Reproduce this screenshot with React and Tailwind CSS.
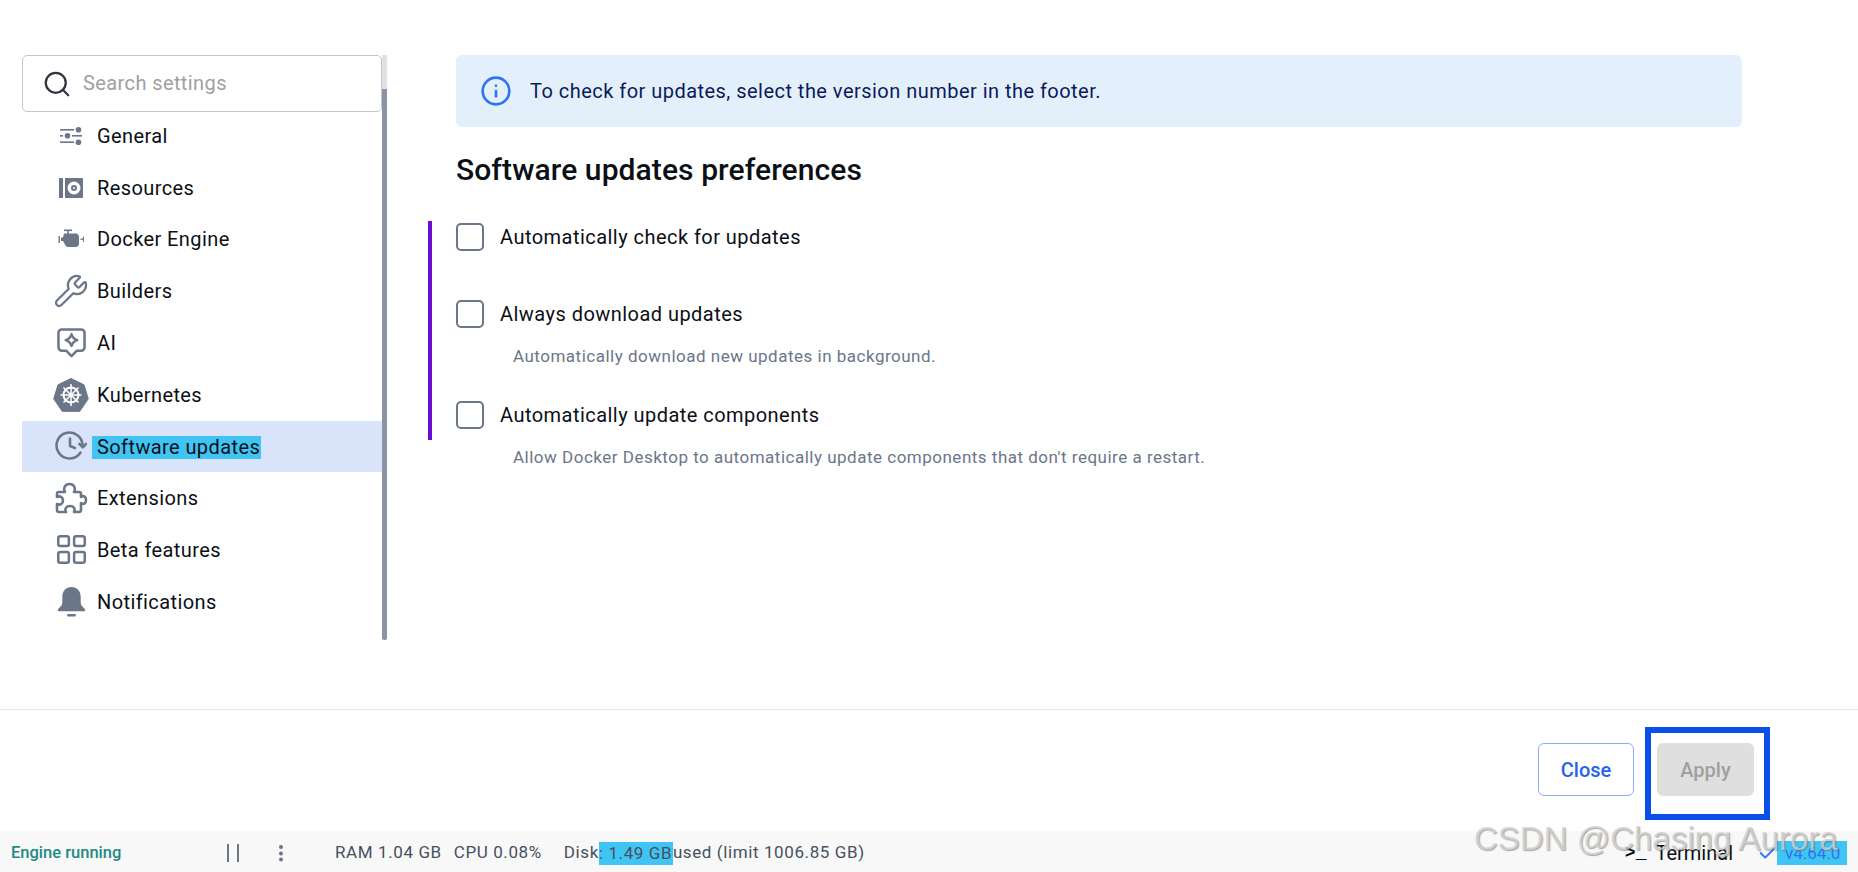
import React from "react";
import { Search, Wrench, Info, Check } from "lucide-react";

const slate = "#6b7689";

function GeneralIcon() {
  return (
    <svg width="22" height="18" viewBox="0 0 22 18" fill={slate}>
      <rect x="0" y="2" width="14" height="1.6" />
      <circle cx="18.5" cy="2.8" r="2.8" />
      <rect x="0" y="8" width="3" height="1.6" />
      <circle cx="7.5" cy="8.8" r="2.8" />
      <rect x="12" y="8" width="10" height="1.6" />
      <rect x="0" y="14.4" width="14" height="1.6" />
      <circle cx="18.5" cy="15.2" r="2.8" />
    </svg>
  );
}
function ResourcesIcon() {
  return (
    <svg width="24" height="20" viewBox="0 0 24 20" fill={slate}>
      <rect x="0" y="0" width="4" height="20" rx="0.5" />
      <path fillRule="evenodd" d="M6 0h17a1 1 0 0 1 1 1v18a1 1 0 0 1-1 1H6zM15 3.5a6.5 6.5 0 1 0 0 13 6.5 6.5 0 0 0 0-13z" />
      <path fillRule="evenodd" d="M15 7a3 3 0 1 0 0 6 3 3 0 0 0 0-6zm0 2a1 1 0 1 1 0 2 1 1 0 0 1 0-2z" />
    </svg>
  );
}
function EngineIcon() {
  return (
    <svg width="26" height="20" viewBox="0 0 26 20" fill={slate}>
      <rect x="6" y="0.5" width="8" height="1.6" />
      <rect x="9.2" y="1" width="1.6" height="4" />
      <path d="M6 4.5h13l2 2.5v8.5l-2 2.5H10c-2 0-3-2-3.5-3.5L5 12H3V8.5h2z" />
      <rect x="0.5" y="7" width="1.4" height="7" />
      <rect x="22.5" y="9.5" width="3" height="1.4" />
      <rect x="25" y="7.5" width="1" height="5.5" />
    </svg>
  );
}
function AiIcon() {
  return (
    <svg width="29" height="30" viewBox="0 0 30 31" fill="none" stroke={slate} strokeWidth="2.6" strokeLinejoin="round">
      <path d="M5 1.5h20a3.5 3.5 0 0 1 3.5 3.5v15a3.5 3.5 0 0 1-3.5 3.5h-4.5L15 29l-5.5-5.5H5A3.5 3.5 0 0 1 1.5 20V5A3.5 3.5 0 0 1 5 1.5z" />
      <path d="M15 6.500c1 3 2.500 5 6 6-3.500 1-5 3-6 6-1-3-2.500-5-6-6 3.500-1 5-3 6-6z" />
    </svg>
  );
}
function KubeIcon() {
  return (
    <svg width="36" height="34" viewBox="0 0 36 34">
      <path d="M18 0.500l13 6.300 4.300 14-8.500 12.500H9.200L0.700 20.800 5 6.800z" fill={slate} stroke={slate} strokeLinejoin="round" />
      <g stroke="#fff" strokeWidth="1.500" fill="none">
        <circle cx="18" cy="17" r="7.500" strokeWidth="2" />
        <path d="M18 6v22M7.500 17h21M10.500 9.500l15 15M25.500 9.500l-15 15" />
      </g>
      <circle cx="18" cy="17" r="2" fill="#fff" />
    </svg>
  );
}
function UpdateIcon() {
  return (
    <svg width="32" height="30" viewBox="0 0 32 30" fill="none" stroke={slate} strokeWidth="2.600" strokeLinecap="round" strokeLinejoin="round">
      <path d="M25.500 21.500A13 13 0 1 1 27.500 15.500" />
      <path d="M15 7.500V15l5 2" />
      <path d="M24.500 13l3.300 3.300 3.200-3.300" />
    </svg>
  );
}
function PuzzleIcon() {
  return (
    <svg width="33" height="33" viewBox="0 0 33 33" fill="none" stroke={slate} strokeWidth="2.600" strokeLinejoin="round">
      <path d="M4 10h6c-2-4 0-8 4.500-8s6.500 4 4.500 8h5a2 2 0 0 1 2 2v3c3-2 5 0 5 3s-2 5-5 3v7a2 2 0 0 1-2 2h-5c1.500-3 0-6-4-6s-5.500 3-4 6H4a2 2 0 0 1-2-2v-6c3 1.500 6 0 6-3.500s-3-5-6-3.500v-3a2 2 0 0 1 2-2z" />
    </svg>
  );
}
function GridIcon() {
  return (
    <svg width="29" height="29" viewBox="0 0 30 30" fill="none" stroke={slate} strokeWidth="2.600">
      <rect x="1.300" y="1.300" width="11" height="10" rx="2" />
      <rect x="17.700" y="1.300" width="11" height="10" rx="2" />
      <rect x="1.300" y="17.700" width="11" height="11" rx="2" />
      <rect x="17.700" y="17.700" width="11" height="11" rx="2" />
    </svg>
  );
}
function BellIcon() {
  return (
    <svg width="29" height="30" viewBox="0 0 30 31" fill={slate}>
      <path d="M15 0c5.500 0 9.500 4 9.500 10v6c0 3 2 4.500 4.500 7 0.500 1 0 2-1 2H2c-1 0-1.500-1-1-2 2.500-2.500 4.500-4 4.500-7v-6C5.500 4 9.500 0 15 0z" />
      <rect x="10.500" y="28" width="9" height="2.500" rx="1" />
    </svg>
  );
}

const items = [
  ["General", <GeneralIcon />],
  ["Resources", <ResourcesIcon />],
  ["Docker Engine", <EngineIcon />],
  ["Builders", <Wrench size={36} strokeWidth={1.5} color={slate} />],
  ["AI", <AiIcon />],
  ["Kubernetes", <KubeIcon />],
  ["Software updates", <UpdateIcon />, true],
  ["Extensions", <PuzzleIcon />],
  ["Beta features", <GridIcon />],
  ["Notifications", <BellIcon />],
];

function NavRow({ label, icon, active }) {
  return (
    <div className={`h-[51.750px] flex items-center ${active ? "bg-[#d9e4fb]" : ""}`}>
      <div className="ml-[23px] w-[52px] flex justify-center shrink-0">{icon}</div>
      {active ? (
        <span className="text-[20px] leading-[23px] tracking-[0.4px] text-[#0b0f16] bg-[#40c4f4] pl-[5px] pr-[1px] -ml-[5px] mt-[2px]">{label}</span>
      ) : (
        <span className="text-[20px] tracking-[0.4px] text-[#0b0f16]">{label}</span>
      )}
    </div>
  );
}

function Check0({ label, hint, className }) {
  return (
    <div className={className}>
      <div className="flex items-center">
        <div className="w-[28px] h-[28px] rounded-[5px] border-[2.500px] border-[#6b7689] mr-[16px] shrink-0" />
        <span className="text-[20px] leading-[28px] tracking-[0.46px] text-[#0b0f16]">{label}</span>
      </div>
      {hint && <div className="pl-[57px] mt-[16px] text-[17px] leading-[24px] tracking-[0.5px] text-[#6b7689]">{hint}</div>}
    </div>
  );
}

export default function App() {
  return (
    <div className="relative w-[1858px] h-[872px] overflow-hidden bg-white flex flex-col font-['Roboto',sans-serif]">
      <div className="flex-1 flex min-h-0">
        <div className="w-[388px] pl-[22px] pt-[55px] shrink-0 flex">
          <div className="w-[360px] shrink-0">
            <div className="h-[57px] rounded-[5px] border border-[#c4c7cc] flex items-center pl-[19px]">
              <Search size={30} strokeWidth={1.800} color="#2d3540" className="mr-[11px]" />
              <span className="text-[20px] tracking-[0.4px] text-[#a0a0a0] pb-[1px]">Search settings</span>
            </div>
            <div className="-mt-[2px]">
              {items.map(([l, i, a]) => (
                <NavRow key={l} label={l} icon={i} active={a} />
              ))}
            </div>
          </div>
          <div className="w-[5px] h-[585px] flex flex-col shrink-0">
            <div className="h-[34px] bg-[#e2e2e2]" />
            <div className="flex-1 bg-[#8b93a7] rounded-b-[2px]" />
          </div>
        </div>
        <div className="pl-[68px] pt-[55px] flex-1">
          <div className="w-[1286px] h-[72px] rounded-[6px] bg-[#e3f0fb] flex items-center pl-[24px]">
            <Info size={32} strokeWidth={2} color="#2f74f0" className="mr-[18px]" />
            <span className="text-[20px] tracking-[0.47px] text-[#0c1a5c] pb-[1px]">To check for updates, select the version number in the footer.</span>
          </div>
          <h1 className="text-[30px] font-medium tracking-[0.09px] text-[#0b0f16] mt-[25px] leading-[36px]">Software updates preferences</h1>
          <div className="-ml-[28px] mt-[33px] border-l-[4px] border-[#6a0dcf] h-[219px] pl-[24px]">
            <div className="pt-[2px]" />
            <Check0 label="Automatically check for updates" />
            <Check0 label="Always download updates" hint="Automatically download new updates in background." className="mt-[49px]" />
            <Check0 label="Automatically update components" hint="Allow Docker Desktop to automatically update components that don't require a restart." className="mt-[33px]" />
          </div>
        </div>
      </div>

      <div className="h-[122px] border-t border-[#e8e8e8] shrink-0 flex justify-end items-start pt-[33px] pr-[104px] gap-[23px]">
        <button className="w-[96px] h-[53px] rounded-[6px] border border-[#8aaef8] text-[20px] font-medium text-[#2563eb]">Close</button>
        <button className="w-[97px] h-[53px] rounded-[6px] bg-[#dfdfdf] text-[20px] font-medium text-[#a0a0a0]">Apply</button>
      </div>

      <div className="h-[41px] bg-[#f8f8f8] shrink-0 flex items-center pt-[3px] text-[17px] tracking-[0.6px] text-[#46505f]">
        <span className="pl-[11px] w-[226px] font-medium text-[16.500px] text-[#1f8a83] tracking-normal">Engine running</span>
        <svg width="14" height="18" viewBox="0 0 14 18" fill="#6b7689" className="mr-[38px]">
          <rect x="1" y="0" width="2" height="18" />
          <rect x="11" y="0" width="2" height="18" />
        </svg>
        <svg width="6" height="18" viewBox="0 0 6 18" fill="#6b7689" className="mr-[51px]">
          <circle cx="3" cy="3" r="2" />
          <circle cx="3" cy="9.500" r="2" />
          <circle cx="3" cy="15.500" r="2" />
        </svg>
        <span className="mr-[12px]">RAM 1.04 GB</span>
        <span className="mr-[22px]">CPU 0.08%</span>
        <span>Disk</span>
        <span className="bg-[#40c4f4] h-[23px] leading-[23px] w-[74px] whitespace-nowrap">: 1.49 GB</span>
        <span>used (limit 1006.85 GB)</span>
        <div className="flex-1" />
        <span className="text-[#0b0f16] text-[20px] mr-[24px] flex items-center tracking-normal">
          <span className="mr-[9px] font-['Liberation_Mono',monospace] font-bold text-[18px]">&gt;_</span>
          Terminal
        </span>
        <Check size={22} color="#2f74f0" className="-mr-[2px] relative" />
        <span className="bg-[#40c4f4] text-[#2f74f0] text-[17px] w-[70px] h-[24px] leading-[24px] pl-[8px] mr-[11px] tracking-normal">v4.64.0</span>
      </div>

      <div className="absolute left-[1645px] top-[727px] w-[125px] h-[93px] border-[6px] border-[#0a4fe8] pointer-events-none" />
      <div
        className="absolute left-[1474px] top-[817px] text-[33px] leading-[44px] text-[#d4d4d4]/80 whitespace-nowrap font-['Liberation_Sans',sans-serif] [text-shadow:1px_1px_1px_rgba(90,90,90,0.5)] pointer-events-none"
      >
        CSDN @Chasing Aurora
      </div>
    </div>
  );
}
